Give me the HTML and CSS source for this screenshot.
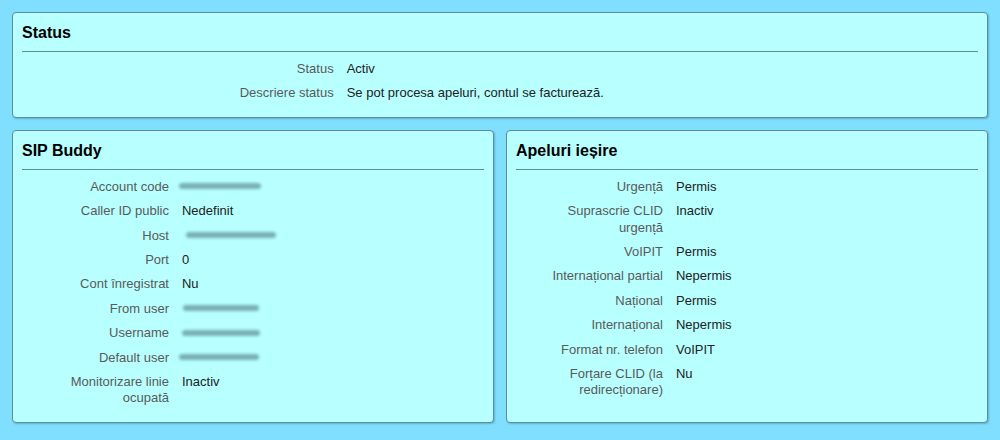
FILE: index.html
```html
<!DOCTYPE html>
<html lang="ro">
<head>
<meta charset="utf-8">
<title>Status</title>
<link rel="stylesheet" href="styles.css">
</head>
<body>
<div class="page">
  <section class="panel">
    <h2 class="panel-title">Status</h2>
    <div class="rows">
      <div class="label">Status</div><div class="value">Activ</div>
      <div class="label">Descriere status</div><div class="value">Se pot procesa apeluri, contul se facturează.</div>
    </div>
  </section>
  <div class="cols">
    <section class="panel">
      <h2 class="panel-title">SIP Buddy</h2>
      <div class="rows">
        <div class="label">Account code</div><div class="value"><span class="blur b1"></span></div>
        <div class="label">Caller ID public</div><div class="value">Nedefinit</div>
        <div class="label">Host</div><div class="value"><span class="blur b2"></span></div>
        <div class="label">Port</div><div class="value">0</div>
        <div class="label">Cont înregistrat</div><div class="value">Nu</div>
        <div class="label">From user</div><div class="value"><span class="blur b3"></span></div>
        <div class="label">Username</div><div class="value"><span class="blur b4"></span></div>
        <div class="label">Default user</div><div class="value"><span class="blur b5"></span></div>
        <div class="label">Monitorizare linie ocupată</div><div class="value">Inactiv</div>
      </div>
    </section>
    <section class="panel">
      <h2 class="panel-title">Apeluri ieșire</h2>
      <div class="rows">
        <div class="label">Urgență</div><div class="value">Permis</div>
        <div class="label">Suprascrie CLID urgență</div><div class="value">Inactiv</div>
        <div class="label">VoIPIT</div><div class="value">Permis</div>
        <div class="label">Internațional partial</div><div class="value">Nepermis</div>
        <div class="label">Național</div><div class="value">Permis</div>
        <div class="label">Internațional</div><div class="value">Nepermis</div>
        <div class="label">Format nr. telefon</div><div class="value">VoIPIT</div>
        <div class="label">Forțare CLID (la redirecționare)</div><div class="value">Nu</div>
      </div>
    </section>
  </div>
</div>
</body>
</html>
```

FILE: styles.css
```css
html, body {
  margin: 0;
  padding: 0;
  background: #80dfff;
}
body {
  font-family: "Liberation Sans", Arial, sans-serif;
  font-size: 13px;
  color: #222;
}
.page {
  padding: 12px;
  display: flex;
  flex-direction: column;
  gap: 12px;
}
.cols {
  display: grid;
  grid-template-columns: 1fr 1fr;
  gap: 12px;
}
.panel {
  background: #b8ffff;
  border: 1px solid #5f8d9c;
  border-radius: 4px;
  box-shadow: 1px 1px 2px rgba(0, 40, 60, 0.25);
  padding: 10px 9px 11px 9px;
}
.panel-title {
  margin: 0;
  font-size: 16px;
  font-weight: bold;
  line-height: 19px;
  color: #000;
  padding-bottom: 9px;
  border-bottom: 1px solid #5f8d9c;
  margin-bottom: 5px;
}
.rows {
  display: grid;
  grid-template-columns: 33.333% 1fr;
}
.label {
  text-align: right;
  color: #5a5a5a;
  padding: 4px 7px 4px 12px;
  line-height: 16.4px;
}
.value {
  padding: 4px 6px;
  line-height: 16.4px;
  color: #222;
}
.blur {
  display: inline-block;
  height: 6px;
  background: #78b0b4;
  border-radius: 3px;
  filter: blur(1.8px);
  vertical-align: middle;
  position: relative;
  top: -1px;
}
.b1 { width: 82px; margin-left: -3px; }
.b2 { width: 90px; margin-left: 4px; }
.b3 { width: 76px; margin-left: 1px; }
.b4 { width: 78px; }
.b5 { width: 80px; margin-left: -3px; }
```
